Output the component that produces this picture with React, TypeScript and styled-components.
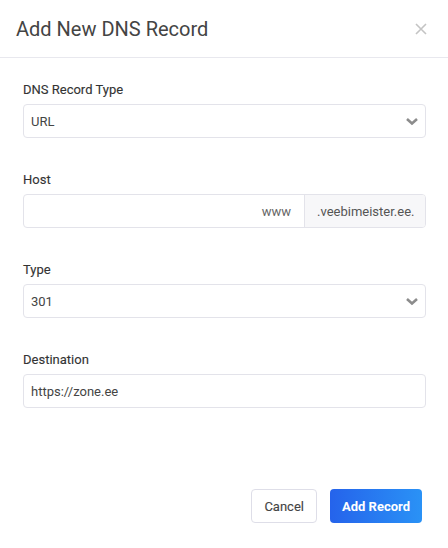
import styled, { createGlobalStyle } from "styled-components";

const GlobalStyle = createGlobalStyle`
  html, body {
    margin: 0;
    padding: 0;
    background: #ffffff;
  }
  body {
    font-family: Roboto, "Liberation Sans", Arial, sans-serif;
    color: #333;
  }
`;

const Modal = styled.div`
  width: 448px;
  height: 548px;
  box-sizing: border-box;
  display: flex;
  flex-direction: column;
  background: #fff;
`;

const Header = styled.div`
  height: 57px;
  border-bottom: 1px solid #e8e8ee;
  display: flex;
  align-items: center;
  justify-content: space-between;
  padding: 0 20px 0 16px;
`;

const Title = styled.h2`
  margin: 0;
  font-size: 20px;
  font-weight: 400;
  color: #444;
  line-height: 24px;
`;

const CloseButton = styled.button`
  border: none;
  background: none;
  padding: 0;
  width: 14px;
  height: 14px;
  display: flex;
  align-items: center;
  justify-content: center;
  cursor: pointer;
`;

const Body = styled.div`
  padding: 24px 22px 0 23px;
  display: flex;
  flex-direction: column;
  gap: 34px;
`;

const Field = styled.div`
  display: flex;
  flex-direction: column;
  gap: 6px;
`;

const Label = styled.label`
  font-size: 13px;
  line-height: 16px;
  font-weight: 400;
  color: #333;
  -webkit-text-stroke: 0.12px #333;
`;

const Control = styled.div`
  position: relative;
  height: 34px;
  box-sizing: border-box;
  border: 1px solid #e3e3ea;
  border-radius: 4px;
  display: flex;
  align-items: stretch;
  overflow: hidden;
  background: #fff;
`;

const Value = styled.div<{ $right?: boolean }>`
  flex: 1;
  display: flex;
  align-items: center;
  justify-content: ${(p) => (p.$right ? "flex-end" : "flex-start")};
  padding: ${(p) => (p.$right ? "0 13px 0 7px" : "0 7px")};
  font-size: 13px;
  color: ${(p) => (p.$right ? "#666" : "#444")};
`;

const Chevron = styled.span`
  display: flex;
  align-items: center;
  padding-right: 6px;
`;

const Addon = styled.div`
  width: 121px;
  box-sizing: border-box;
  border-left: 1px solid #e3e3ea;
  background: #f7f7f9;
  display: flex;
  align-items: center;
  padding-left: 12px;
  font-size: 13px;
  color: #555;
`;

const Footer = styled.div`
  margin-top: auto;
  display: flex;
  justify-content: flex-end;
  gap: 13px;
  padding: 0 26px 25px 0;
`;

const Button = styled.button<{ $primary?: boolean }>`
  height: 34px;
  box-sizing: border-box;
  padding: 0 12px;
  border-radius: 4px;
  font-family: Roboto, "Liberation Sans", Arial, sans-serif;
  font-size: 13px;
  font-weight: ${(p) => (p.$primary ? 700 : 400)};
  -webkit-text-stroke: ${(p) => (p.$primary ? "0" : "0.12px #444")};
  border: ${(p) => (p.$primary ? "none" : "1px solid #dedee8")};
  background: ${(p) =>
    p.$primary ? "linear-gradient(90deg, #2563eb 0%, #2a92f6 100%)" : "#fff"};
  color: ${(p) => (p.$primary ? "#fff" : "#444")};
  cursor: pointer;
`;

const ChevronIcon = () => (
  <svg width="14" height="10" viewBox="0 0 14 10">
    <polyline
      points="2,3 7,7.5 12,3"
      fill="none"
      stroke="#8c8c8c"
      strokeWidth="2.6"
      strokeLinejoin="miter"
    />
  </svg>
);

const Select = ({ value }: { value: string }) => (
  <Control>
    <Value>{value}</Value>
    <Chevron>
      <ChevronIcon />
    </Chevron>
  </Control>
);

const App = () => {
  return (
    <>
      <GlobalStyle />
      <Modal>
        <Header>
          <Title>Add New DNS Record</Title>
          <CloseButton aria-label="Close">
            <svg width="12" height="12" viewBox="0 0 12 12">
              <path d="M1 1 L11 11 M11 1 L1 11" stroke="#c4c4c4" strokeWidth="1.6" />
            </svg>
          </CloseButton>
        </Header>
        <Body>
          <Field>
            <Label>DNS Record Type</Label>
            <Select value="URL" />
          </Field>
          <Field>
            <Label>Host</Label>
            <Control>
              <Value $right>www</Value>
              <Addon>.veebimeister.ee.</Addon>
            </Control>
          </Field>
          <Field>
            <Label>Type</Label>
            <Select value="301" />
          </Field>
          <Field>
            <Label>Destination</Label>
            <Control>
              <Value>https://zone.ee</Value>
            </Control>
          </Field>
        </Body>
        <Footer>
          <Button>Cancel</Button>
          <Button $primary>Add Record</Button>
        </Footer>
      </Modal>
    </>
  );
};

export default App;
